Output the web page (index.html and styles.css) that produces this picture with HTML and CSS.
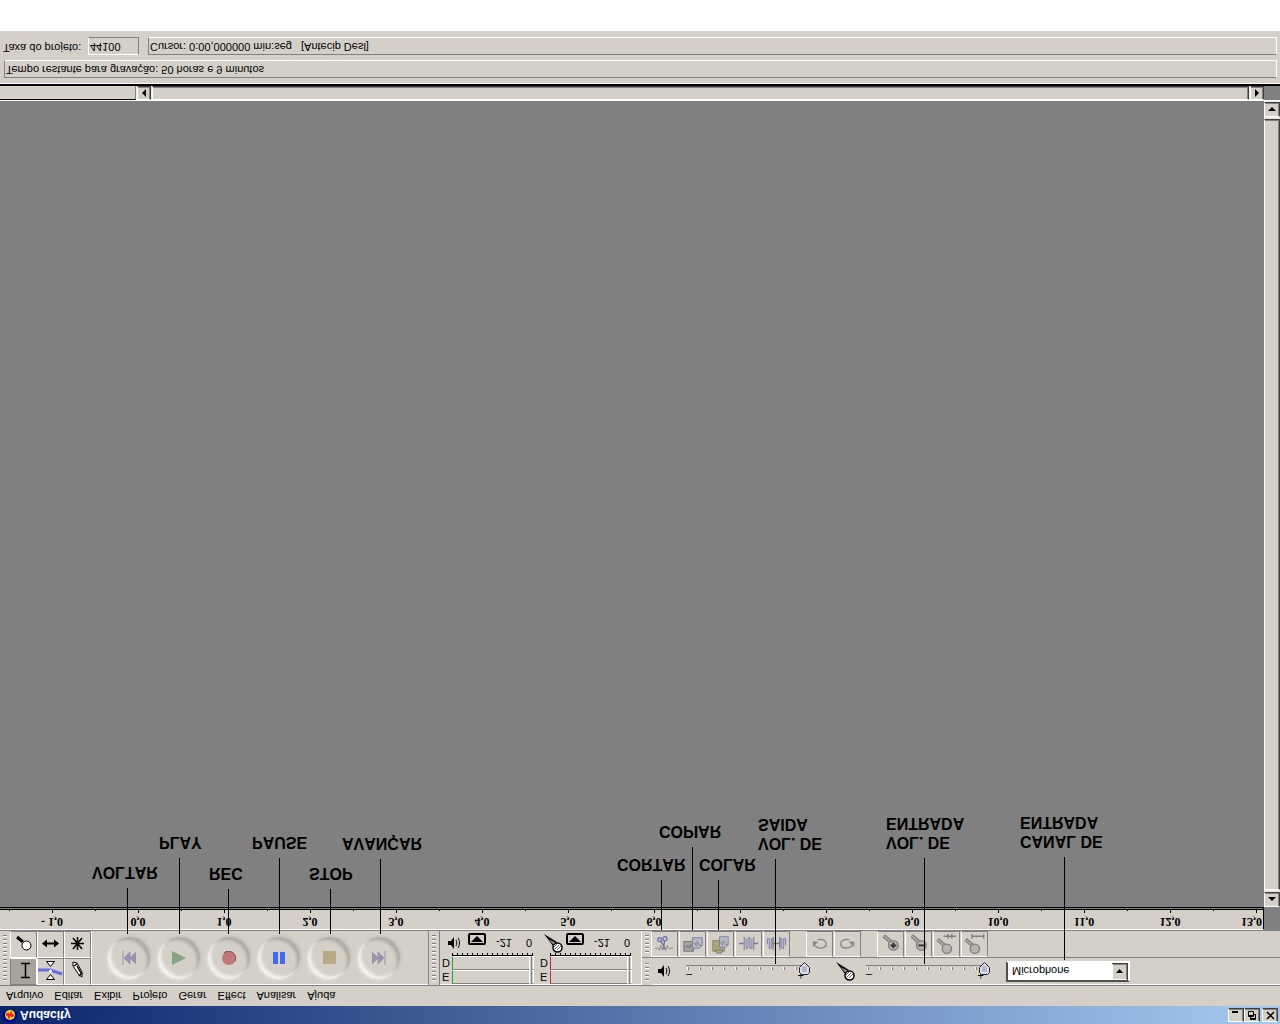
FILE: index.html
```html
<!DOCTYPE html>
<html lang="pt">
<head>
<meta charset="utf-8">
<title>Audacity</title>
<link rel="stylesheet" href="styles.css">
</head>
<body>
<svg class="defs" aria-hidden="true">
  <symbol id="speaker" viewBox="0 0 16 14">
    <path d="M1 5h3l3-4v12l-3-4H1z" fill="#000"/>
    <path d="M9 4c1 2 1 4 0 6M11 2c2 3 2 7 0 10" fill="none" stroke="#000"/>
  </symbol>
  <symbol id="mic" viewBox="0 0 20 20">
    <path d="M1 19L10 7l4 4z" fill="#000"/>
    <path d="M5 14l6-6 2 2z" fill="#999"/>
    <circle cx="14.500" cy="5.500" r="4.500" fill="#fff" stroke="#000" stroke-width="1.500"/>
    <path d="M12 4l4 4M14 3l4 4M11 6l3 3" stroke="#666" fill="none"/>
  </symbol>
  <symbol id="lens" viewBox="0 0 26 26">
    <path d="M6 21l8-7" stroke="#77756f" stroke-width="4"/>
    <path d="M6 21l8-7" stroke="#a9a7a1" stroke-width="2"/>
    <circle cx="16" cy="11" r="5" fill="#b4b4b0" stroke="#808080" stroke-width="1.500"/>
  </symbol>
  <symbol id="rewind" viewBox="0 0 14 14">
    <path d="M1 0v14M2 7l6-6v12zM8 7l6-6v12z" fill="#9c92ae" stroke="#9c92ae"/>
  </symbol>
  <symbol id="turn" viewBox="0 0 26 26">
    <path d="M11 17c5 1 9-1 9-4 0-6-9-6-12-2" fill="none" stroke="#888" stroke-width="1.500"/>
    <path d="M6 9v6h6z" fill="#888"/>
  </symbol>
</svg>
<div class="app">
  <header class="titlebar">
    <svg class="logo" viewBox="0 0 16 16"><circle cx="8" cy="8" r="5" fill="#ffd21c"/><path d="M2 11V7c0-7 12-7 12 0v4" fill="none" stroke="#0000b0" stroke-width="2"/><path d="M4 8l2 1 1-3 2 4 1-3 2 1" fill="none" stroke="#e8280c" stroke-width="2"/></svg>
    <h1>Audacity</h1>
    <button class="winbtn" aria-label="Minimizar"><svg viewBox="0 0 12 10"><path d="M2 8h6" stroke="#000" stroke-width="2"/></svg></button>
    <button class="winbtn" aria-label="Restaurar"><svg viewBox="0 0 12 10"><path d="M4.500 3V.5h5v5H8M2.500 3.500h5v5h-5zM4 1.500h6M2 4.500h6" fill="none" stroke="#000"/></svg></button>
    <button class="winbtn close" aria-label="Fechar"><svg viewBox="0 0 12 10"><path d="M3 1l7 7M10 1L3 8" stroke="#000" stroke-width="1.500"/></svg></button>
  </header>
  <nav class="menu">
    <button>Arquivo</button><button>Editar</button><button>Exibir</button><button>Projeto</button><button>Gerar</button><button>Effect</button><button>Analisar</button><button>Ajuda</button>
  </nav>
  <section class="dock">
    <div class="grip"></div>
    <div class="tools">
      <button class="pressed" aria-label="Seleção"><svg viewBox="0 0 26 26"><path d="M10 6.500h9M10 20.500h9M14.500 7v13" stroke="#000" stroke-width="1.500" fill="none"/></svg></button>
      <button aria-label="Envelope"><svg viewBox="0 0 26 26"><path d="M0 14h12l12-4" fill="none" stroke="#6a6ae6" stroke-width="3"/><path d="M8.500 4.500h8l-4 5zM8.500 22.500h8l-4-5z" fill="#fff" stroke="#000" transform="matrix(1 0 0 -1 0 27)"/><circle cx="12.500" cy="13" r="1.500" fill="#fff"/></svg></button>
      <button aria-label="Desenho"><svg viewBox="0 0 26 26"><path d="M8 18l6-9 3-2v5l-5 9-4 1z" fill="#fff" stroke="#000"/><path d="M14 8l3 3M9 18l3 2M12 18l4-7" stroke="#000" stroke-width="1.500"/></svg></button>
      <button aria-label="Zoom"><svg viewBox="0 0 26 26"><path d="M6 20l6-5" stroke="#000" stroke-width="3"/><circle cx="15.500" cy="11.500" r="4.500" fill="#fff" stroke="#000"/></svg></button>
      <button aria-label="Deslizar"><svg viewBox="0 0 26 26"><path d="M6 13.500h14" stroke="#000" stroke-width="2"/><path d="M4 13.500l5-4v8zM21 13.500l-5-4v8z"/></svg></button>
      <button aria-label="Multi"><svg viewBox="0 0 26 26"><path d="M12.500 7v13M6 13.500h13M8 8l9 11M17 8L8 19" stroke="#000" stroke-width="1.500"/></svg></button>
    </div>
    <div class="transport">
      <button aria-label="Voltar"><svg viewBox="0 0 14 14"><use href="#rewind"/></svg></button>
      <button aria-label="Play"><svg viewBox="0 0 14 14"><path d="M0 0l14 7-14 7z" fill="#86a488"/></svg></button>
      <button aria-label="Rec"><svg viewBox="0 0 14 14"><circle cx="7" cy="7" r="7" fill="#c07878"/><path d="M2 12a7 7 0 0 0 11-8" fill="none" stroke="#7c4a4a"/></svg></button>
      <button aria-label="Pause"><svg viewBox="0 0 14 14"><path d="M1 1h5v12H1zM8 1h5v12H8z" fill="#4468ee"/></svg></button>
      <button aria-label="Stop"><svg viewBox="0 0 14 14"><path d="M1 1h13v13H1z" fill="#b9a985"/></svg></button>
      <button aria-label="Avançar"><svg class="mirror" viewBox="0 0 14 14"><use href="#rewind"/></svg></button>
    </div>
    <div class="grip"></div>
    <div class="meters">
      <div class="meter play">
        <div class="level"><span>E</span><i class="bar"></i><i class="clip"></i></div>
        <div class="level"><span>D</span><i class="bar"></i><i class="clip"></i></div>
        <div class="ticks"></div>
        <div class="scale"><svg class="s16" viewBox="0 0 16 14"><use href="#speaker"/></svg><button aria-label="Opções do medidor de saída"><svg viewBox="0 0 12 6"><path d="M0 0h12L6 6z"/></svg></button><span>-21</span><span>0</span></div>
      </div>
      <div class="meter rec">
        <div class="level"><span>E</span><i class="bar"></i><i class="clip"></i></div>
        <div class="level"><span>D</span><i class="bar"></i><i class="clip"></i></div>
        <div class="ticks"></div>
        <div class="scale"><svg class="s20" viewBox="0 0 20 20"><use href="#mic"/></svg><button aria-label="Opções do medidor de entrada"><svg viewBox="0 0 12 6"><path d="M0 0h12L6 6z"/></svg></button><span>-21</span><span>0</span></div>
      </div>
    </div>
    <div class="rows">
      <div class="row mixer">
        <div class="grip"></div>
        <svg class="s16" viewBox="0 0 16 14"><use href="#speaker"/></svg>
        <div class="slider"><span>–</span><span>+</span><input type="range" value="100" aria-label="Volume de saída"></div>
        <svg class="s20" viewBox="0 0 20 20"><use href="#mic"/></svg>
        <div class="slider"><span>–</span><span>+</span><input type="range" value="100" aria-label="Volume de entrada"></div>
        <select aria-label="Canal de entrada"><option>Microphone</option></select>
      </div>
      <div class="row edit">
        <div class="grip"></div>
        <div class="group">
          <button aria-label="Cortar"><svg viewBox="0 0 26 26"><path d="M3 8h4l1-2 1 5 2-5 1 4 2-4 2 5 1-3h5" fill="none" stroke="#8c8c88"/><path d="M9 16l5-9M13 16L12 7" stroke="#77778c" stroke-width="1.500"/><circle cx="8" cy="17" r="2" fill="none" stroke="#7676b0" stroke-width="1.500"/><circle cx="13.500" cy="18" r="2" fill="none" stroke="#7676b0" stroke-width="1.500"/></svg></button>
          <button aria-label="Copiar"><svg viewBox="0 0 26 26"><path d="M4 5h10v10H4z" fill="#a4a4a4" stroke="#777"/><path d="M5 10l2-1 1 2 2-3 1 4 2-2" stroke="#777" fill="none"/><path d="M13 8h7l3 3v8H13z" fill="#b9b9c4" stroke="#7c7cae"/><path d="M14 13h2l1-3 1 5 2-4h3" stroke="#888" fill="none"/></svg></button>
          <button aria-label="Colar"><svg viewBox="0 0 26 26"><path d="M5 5h12v11H5z" fill="#a9a67c" stroke="#8a8660"/><path d="M8 6l1-3h5l1 3z" fill="#b8b478" stroke="#777"/><path d="M12 9h6l3 3v8h-9z" fill="#b9b9c4" stroke="#7c7cae"/><path d="M12 14h2l1-3 1 5 2-4h3" stroke="#888" fill="none"/></svg></button>
          <button aria-label="Aparar"><svg viewBox="0 0 26 26"><path d="M3 13h5M18 13h5" stroke="#7878b4" stroke-width="1.500"/><path d="M8.500 6v14M18.500 6v14" stroke="#777"/><path d="M10.500 18V8h2v11h2V8h2v10" fill="none" stroke="#7878b4"/></svg></button>
          <button aria-label="Silenciar"><svg viewBox="0 0 26 26"><path d="M3.500 12v6h2V8h2v10h2V9M16.500 9v9h2V8h2v10h2v-7" fill="none" stroke="#7878b4"/><path d="M9 13h7" stroke="#777" stroke-width="1.500"/><path d="M9.500 6v14M16.500 6v14" stroke="#777"/></svg></button>
        </div>
        <div class="group">
          <button aria-label="Desfazer"><svg viewBox="0 0 26 26"><use href="#turn"/></svg></button>
          <button aria-label="Refazer"><svg class="mirror" viewBox="0 0 26 26"><use href="#turn"/></svg></button>
        </div>
        <div class="group">
          <button aria-label="Mais zoom"><svg viewBox="0 0 26 26"><use href="#lens"/><path d="M13 11h6M16 8v6" stroke="#333" stroke-width="2"/></svg></button>
          <button aria-label="Menos zoom"><svg viewBox="0 0 26 26"><use href="#lens"/><path d="M13 11h6" stroke="#333" stroke-width="2"/></svg></button>
          <button aria-label="Ajustar seleção"><svg viewBox="0 0 26 26"><svg x="-2" y="-3" width="26" height="26"><use href="#lens"/></svg><path d="M10 20.500h13M14.500 18v5M18.500 18v5" stroke="#808080" stroke-width="1.500"/></svg></button>
          <button aria-label="Ajustar projeto"><svg viewBox="0 0 26 26"><svg x="-2" y="-3" width="26" height="26"><use href="#lens"/></svg><path d="M10 20.500h13M10.500 18v5M22.500 18v5" stroke="#808080" stroke-width="1.500"/></svg></button>
        </div>
      </div>
    </div>
  </section>
  <div class="rulerbar">
    <ol class="ruler">
      <li>- 1,0</li><li>0,0</li><li>1,0</li><li>2,0</li><li>3,0</li><li>4,0</li><li>5,0</li><li>6,0</li><li>7,0</li><li>8,0</li><li>9,0</li><li>10,0</li><li>11,0</li><li>12,0</li><li class="last">13,0</li>
    </ol>
  </div>
  <main class="workspace">
    <div class="tracks"></div>
    <div class="vscroll">
      <button aria-label="Subir"><svg viewBox="0 0 8 4"><path d="M4 0l4 4H0z"/></svg></button>
      <div class="thumb"></div>
      <button aria-label="Descer"><svg viewBox="0 0 8 4"><path d="M0 0h8L4 4z"/></svg></button>
    </div>
  </main>
  <div class="hscroll">
    <div class="filler"></div>
    <button aria-label="Esquerda"><svg class="side" viewBox="0 0 4 8"><path d="M4 0v8L0 4z"/></svg></button>
    <div class="thumb"></div>
    <button aria-label="Direita"><svg class="side" viewBox="0 0 4 8"><path d="M0 0l4 4-4 4z"/></svg></button>
  </div>
  <footer class="status">
    <div class="field">Tempo restante para gravação: 50 horas e 9 minutos</div>
    <div class="line">
      <span>Taxa do projeto:</span>
      <div class="rate">44100</div>
      <div class="field">Cursor: 0:00,000000 min:seg &nbsp; [Antecip Desl]</div>
    </div>
  </footer>
  <div class="callout voltar">VOLTAR</div>
  <div class="callout tocar">PLAY</div>
  <div class="callout gravar">REC</div>
  <div class="callout pausa">PAUSE</div>
  <div class="callout parar">STOP</div>
  <div class="callout avancar">AVANÇAR</div>
  <div class="callout cortar">CORTAR</div>
  <div class="callout copiar">COPIAR</div>
  <div class="callout colar">COLAR</div>
  <div class="callout saida">VOL. DE<br>SAIDA</div>
  <div class="callout entrada">VOL. DE<br>ENTRADA</div>
  <div class="callout canal">CANAL DE<br>ENTRADA</div>
</div>
</body>
</html>
```

FILE: styles.css
```css
:root {
  --face: #d4d0c8;
  --shade: #808080;
}
* { box-sizing: border-box; }
body {
  margin: 0;
  background: #fff;
  font: 11px/14px "Liberation Sans", Arial, sans-serif;
  color: #000;
}
button, select, input { font: inherit; color: inherit; margin: 0; padding: 0; }
button { border: 0; background: none; display: flex; align-items: center; justify-content: center; }
svg { display: block; flex: none; }
.defs { position: absolute; width: 0; height: 0; }

/* The whole window is shown upside down */
.app {
  position: relative;
  display: flex;
  flex-direction: column;
  min-height: 100vh;
  padding-bottom: 31px;
  overflow: hidden;
  transform: scaleY(-1);
}
.mirror { transform: scaleX(-1); }

/* Title bar */
.titlebar {
  display: flex;
  align-items: center;
  height: 18px;
  padding: 0 2px;
  background: linear-gradient(90deg, #0a246a, #a6caf0);
}
.logo { width: 16px; height: 16px; }
.titlebar h1 { flex: 1; margin: 0 0 0 2px; font-size: 12px; line-height: 14px; color: #fff; }
.winbtn, .vscroll button, .hscroll button, .thumb {
  background: var(--face);
  border: 1px solid;
  border-color: #fff #404040 #404040 #fff;
  box-shadow: inset -1px -1px var(--shade);
}
.winbtn { width: 16px; height: 14px; }
.winbtn svg { width: 12px; height: 10px; }
.close { margin-left: 2px; }

/* Menu */
.menu {
  display: flex;
  gap: 11px;
  height: 20px;
  padding: 0 6px;
  background: var(--face);
}

/* Toolbars */
.dock {
  display: flex;
  height: 56px;
  background: var(--face);
  border-top: 1px solid var(--shade);
  border-bottom: 1px solid var(--shade);
  box-shadow: inset 0 1px #fff;
}
.grip {
  flex: none;
  width: 10px;
  border: 3px solid var(--face);
  border-top-width: 4px;
  border-bottom-width: 4px;
  background: repeating-linear-gradient(#fff 0 1px, var(--shade) 1px 2px, var(--face) 2px 4px);
}
.tools { display: grid; grid-template-columns: repeat(3, 27px); grid-template-rows: 27px 27px; }
.tools button, .group button {
  border: 1px solid;
  border-color: #fff var(--shade) var(--shade) #fff;
}
.tools .pressed { background: #a8a49c; border-color: var(--shade) #fff #fff var(--shade); }
.tools svg { width: 26px; height: 26px; }
.transport {
  display: flex;
  align-items: center;
  gap: 8px;
  width: 338px;
  padding-left: 16px;
  border-left: 1px solid #fff;
  border-right: 1px solid var(--shade);
}
.transport button {
  width: 42px;
  height: 42px;
  border-radius: 50%;
  box-shadow:
    inset 3px 3px 3px #f2f0ec,
    inset -3px -3px 3px #b0aca4,
    -1px -1px 3px #ece9e4,
    1px 1px 3px #b8b4ac;
}
.transport svg { width: 14px; height: 14px; }
.meters { display: flex; gap: 6px; width: 202px; padding: 1px 0 0 2px; border-left: 1px solid var(--shade); }
.meter { width: 92px; display: flex; flex-direction: column; }
.level { display: flex; height: 14px; gap: 1px; }
.level span { width: 9px; }
.level i { border: 1px solid; border-color: var(--shade) #fff #fff var(--shade); }
.bar { width: 82px; }
.play .level .bar { border-left-color: #2ca02c; }
.rec .level .bar { border-left-color: #b03030; }
.clip { width: 3px; }
.ticks {
  width: 81px;
  height: 3px;
  margin-left: 10px;
  border-top: 1px solid #000;
  background: repeating-linear-gradient(90deg, #000 0 1px, transparent 1px 5px);
}
.scale { display: flex; align-items: center; height: 20px; padding-left: 5px; }
.s16 { width: 16px; height: 14px; }
.s20 { width: 20px; height: 20px; }
.scale .s20 { margin: 0 -2px; }
.scale button { width: 18px; height: 12px; margin: 8px 10px 0 5px; border: 2px solid #000; border-radius: 2px; }
.scale button svg { width: 12px; height: 6px; }
.scale span { margin-right: 14px; }
.meter .scale svg + button { flex: none; }
.scale button svg { transform: none; }
.rows { flex: 1; min-width: 0; border-left: 1px solid #fff; }
.row { display: flex; align-items: center; height: 27px; }
.row .grip { align-self: stretch; }
.edit { border-top: 1px solid var(--shade); gap: 16px; }
.edit .grip { margin-right: -17px; }
.group { display: flex; gap: 1px; align-self: stretch; }
.group button { width: 27px; }
.group svg { width: 25px; height: 25px; }
.mixer .s16 { margin: 0 13px 0 5px; }
.mixer .s20 { margin: 0 11px 0 24px; }
.slider { display: grid; grid-template-columns: 1fr 1fr; width: 125px; line-height: 8px; }
.slider span:nth-child(2) { text-align: right; padding-right: 7px; }
.slider input {
  grid-column: 1 / 3;
  appearance: none;
  width: 125px;
  height: 13px;
  margin-top: -3px;
  background:
    linear-gradient(var(--shade), var(--shade)) 0 9px / 118px 1px no-repeat,
    repeating-linear-gradient(90deg, #fff 0 1px, var(--shade) 1px 2px, transparent 2px 12px) 1px 5px / 110px 3px no-repeat;
}
.slider input::-webkit-slider-thumb {
  appearance: none;
  width: 13px;
  height: 13px;
  background: url("data:image/svg+xml,%3Csvg xmlns='http://www.w3.org/2000/svg' viewBox='0 0 13 13'%3E%3Cpath d='M3.500 .5h6l2 2v5l-5 5-5-5v-5z' fill='%23dcdcec' stroke='%23222230'/%3E%3Cpath d='M4 4h5M4 6h5M4 8h5' stroke='%239090a8'/%3E%3C/svg%3E");
}
.mixer select {
  appearance: none;
  width: 124px;
  height: 21px;
  margin-left: 15px;
  padding: 0 4px;
  border: 2px solid;
  border-color: #505050 #fff #fff #505050;
  border-radius: 0;
  background:
    url("data:image/svg+xml,%3Csvg xmlns='http://www.w3.org/2000/svg' viewBox='0 0 16 17'%3E%3Cpath d='M0 0h16v17H0z' fill='%23404040'/%3E%3Cpath d='M0 0h15v16H0z' fill='%23fff'/%3E%3Cpath d='M1 1h14v15H1z' fill='%23808080'/%3E%3Cpath d='M1 1h13v14H1z' fill='%23d4d0c8'/%3E%3Cpath d='M4 7h7l-3.500 4z'/%3E%3C/svg%3E") right 0 top 0 / 16px 17px no-repeat,
    #fff;
}

/* Time ruler */
.rulerbar { height: 23px; padding-right: 16px; background: var(--shade); }
.ruler {
  display: flex;
  height: 23px;
  margin: 0;
  padding: 0 0 0 9px;
  overflow: hidden;
  list-style: none;
  background: var(--face);
  border-top: 1px solid #fff;
  border-right: 1px solid #000;
  border-bottom: 1px solid #000;
  box-shadow: inset 0 -1px var(--shade), inset 0 -2px #000;
  font: bold 12px/14px "Liberation Serif", "Times New Roman", serif;
}
.ruler li {
  flex: none;
  width: 86px;
  height: 20px;
  text-align: center;
  background:
    linear-gradient(#000, #000) 43px 100% / 1px 4px no-repeat,
    linear-gradient(#000, #000) 0 100% / 1px 2px no-repeat;
}
.ruler .last { flex: 1; text-align: right; padding-right: 1px; }

/* Tracks and scroll bars */
.workspace { flex: 1; display: flex; background: var(--shade); }
.tracks { flex: 1; }
.vscroll { display: flex; flex-direction: column; gap: 2px; width: 16px; background: #eae8e3; padding-bottom: 1px; }
.vscroll button { height: 15px; }
.vscroll svg { width: 8px; height: 4px; }
.thumb { flex: 1; }
.hscroll {
  display: flex;
  gap: 1px;
  height: 17px;
  padding-right: 16px;
  border-top: 1px solid #fff;
  border-bottom: 2px solid #000;
  background: linear-gradient(var(--shade), var(--shade)) right / 16px 100% no-repeat, #eae8e3;
}
.filler { width: 136px; background: var(--face); border-top: 1px solid #000; border-right: 1px solid var(--shade); }
.hscroll button { width: 14px; }
.hscroll .side { width: 4px; height: 8px; }

/* Status bar */
.status {
  display: flex;
  flex-direction: column;
  gap: 5px;
  height: 53px;
  padding: 5px 3px 0 4px;
  background: var(--face);
  border-top: 1px solid #fff;
}
.field, .rate { height: 18px; padding: 0 1px; border: 1px solid; white-space: nowrap; }
.field { border-color: var(--shade) #fff #fff var(--shade); }
.rate { width: 51px; border-color: #fff var(--shade) var(--shade) #fff; }
.line { display: flex; margin-left: -1px; }
.line span { width: 85px; }
.line .field { flex: 1; margin-left: 9px; }

/* Annotations over the window: a leader line and its caption */
.callout {
  position: absolute;
  left: var(--x);
  top: var(--y);
  padding-top: calc(var(--len) + 6px);
  background: linear-gradient(#000, #000) var(--stem) 0 / 1px var(--len) no-repeat;
  font-size: 16px;
  font-weight: bold;
  line-height: 19px;
  font-kerning: none;
  white-space: nowrap;
  pointer-events: none;
}
.voltar { --x: 92px; --y: 90px; --len: 46px; --stem: 35px; }
.tocar { --x: 159px; --y: 90px; --len: 76px; --stem: 20px; }
.gravar { --x: 209px; --y: 90px; --len: 45px; --stem: 19px; }
.pausa { --x: 252px; --y: 90px; --len: 76px; --stem: 27px; }
.parar { --x: 309px; --y: 90px; --len: 45px; --stem: 21px; }
.avancar { --x: 342px; --y: 90px; --len: 75px; --stem: 38px; }
.cortar { --x: 617px; --y: 94px; --len: 50px; --stem: 44px; }
.copiar { --x: 659px; --y: 94px; --len: 83px; --stem: 33px; }
.colar { --x: 699px; --y: 94px; --len: 50px; --stem: 19px; }
.saida { --x: 758px; --y: 60px; --len: 105px; --stem: 17px; }
.entrada { --x: 886px; --y: 60px; --len: 106px; --stem: 38px; }
.canal { --x: 1020px; --y: 64px; --len: 103px; --stem: 44px; }
```
